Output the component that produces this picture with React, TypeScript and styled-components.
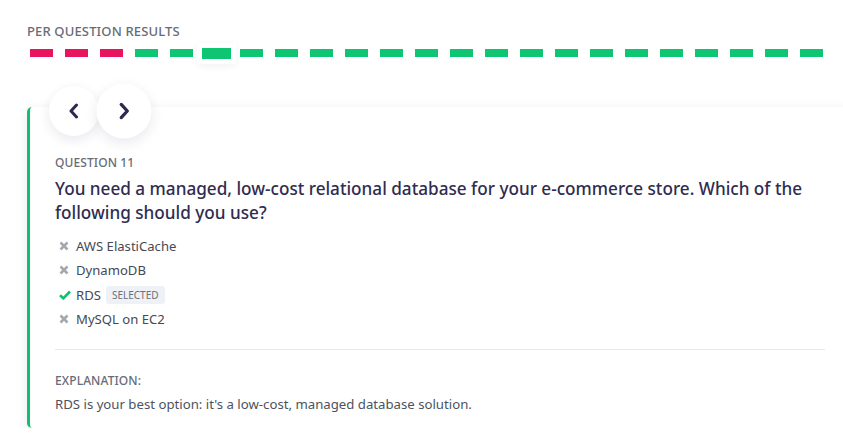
import React from "react";
import styled, { createGlobalStyle } from "styled-components";

const GlobalStyle = createGlobalStyle`
  html, body { margin: 0; padding: 0; background: #ffffff; overflow: hidden; }
  body { font-family: "Segoe UI", "Noto Sans", "Open Sans", sans-serif; }
`;

const Page = styled.div`
  padding: 21px 0 0 27px;
  width: 826px;
`;

const SectionTitle = styled.div`
  font-size: 13px;
  line-height: 20px;
  font-weight: 500;
  color: #676b77;
  letter-spacing: 0.15px;
  text-transform: uppercase;
`;

const DashRow = styled.div`
  display: flex;
  gap: 12px;
  margin: 8px 0 0 3px;
  height: 8px;
`;

const DashCell = styled.div`
  width: 23px;
  height: 8px;
  display: flex;
  align-items: center;
  justify-content: center;
  flex-shrink: 0;
`;

const Dash = styled.div<{ $wrong: boolean; $active: boolean }>`
  flex-shrink: 0;
  width: ${(p) => (p.$active ? 29 : 23)}px;
  height: ${(p) => (p.$active ? 11 : 8)}px;
  background: ${(p) => (p.$wrong ? "#e8145e" : "#0ec572")};
  box-shadow: ${(p) =>
    p.$active ? "0 0 0 5px #ffffff, 0 2px 8px 4px rgba(30, 40, 80, 0.08)" : "none"};
`;

const Card = styled.div`
  position: relative;
  margin-top: 50px;
  background: #ffffff;
  border-left: 3px solid #10c06e;
  border-radius: 5px 0 0 5px;
  box-shadow: 0 3px 12px rgba(30, 40, 80, 0.09);
  padding: 47px 0 14px 25px;
  width: 798px;
`;

const NavGroup = styled.div`
  position: absolute;
  top: -21px;
  left: 19px;
  display: flex;
`;

const NavButton = styled.button<{ $hover?: boolean }>`
  width: 50px;
  height: 50px;
  border-radius: 50%;
  border: none;
  background: #ffffff;
  display: flex;
  align-items: center;
  justify-content: center;
  padding: 0;
  box-shadow: 0 4px 12px rgba(30, 40, 80, 0.1);
  transform: ${(p) => (p.$hover ? "scale(1.1)" : "none")};
  color: #2c2a4e;
`;

const Label = styled.div`
  font-size: 12px;
  line-height: 18px;
  font-weight: 500;
  color: #676b77;
  letter-spacing: 0.1px;
  text-transform: uppercase;
`;

const Question = styled.div`
  margin-top: 5px;
  font-size: 17.15px;
  line-height: 24px;
  font-weight: 500;
  color: #2f2c4f;
`;

const Options = styled.ul`
  list-style: none;
  margin: 9px 0 0;
  padding: 0;
`;

const Option = styled.li`
  display: flex;
  align-items: center;
  height: 24.3px;
  font-size: 13.1px;
  color: #454a56;
`;

const IconBox = styled.span`
  width: 17px;
  margin-left: 4px;
  display: flex;
  align-items: center;
`;

const Badge = styled.span`
  margin-left: 5px;
  background: #eef1f5;
  color: #6b6f7b;
  font-size: 10px;
  text-transform: uppercase;
  padding: 2px 6px;
  border-radius: 3px;
  line-height: 14px;
`;

const Divider = styled.hr`
  border: none;
  border-top: 1px solid #e9eaee;
  margin: 18px 0 0;
  width: 770px;
`;

const ExplanationLabel = styled(Label)`
  margin-top: 22px;
`;

const ExplanationText = styled.div`
  margin-top: 4px;
  font-size: 13.2px;
  line-height: 20px;
  color: #4d5260;
`;

const Cross = () => (
  <svg width="10" height="10" viewBox="0 0 10 10">
    <path d="M1.5 1.5 L8.5 8.5 M8.5 1.5 L1.5 8.5" stroke="#a3a7ae" strokeWidth="2.6" strokeLinecap="butt" />
  </svg>
);

const Check = () => (
  <svg width="12" height="10" viewBox="0 0 12 10">
    <path d="M1 5.2 L4.3 8.3 L11 1.5" stroke="#10c06e" strokeWidth="2.6" fill="none" />
  </svg>
);

const Chevron = ({ dir }: { dir: "left" | "right" }) => (
  <svg width="12" height="16" viewBox="0 0 12 16">
    <path
      d={dir === "left" ? "M8.5 2 L3 8 L8.5 14" : "M3.5 2 L9 8 L3.5 14"}
      stroke="currentColor"
      strokeWidth="3"
      fill="none"
      strokeLinecap="round"
      strokeLinejoin="round"
    />
  </svg>
);

const results = Array.from({ length: 23 }, (_, i) => ({ wrong: i < 3, active: i === 5 }));

const options = [
  { text: "AWS ElastiCache", correct: false, selected: false },
  { text: "DynamoDB", correct: false, selected: false },
  { text: "RDS", correct: true, selected: true },
  { text: "MySQL on EC2", correct: false, selected: false },
];

export default function App() {
  return (
    <>
      <GlobalStyle />
      <Page>
        <SectionTitle>Per Question Results</SectionTitle>
        <DashRow>
          {results.map((r, i) => (
            <DashCell key={i}>
              <Dash $wrong={r.wrong} $active={r.active} />
            </DashCell>
          ))}
        </DashRow>
        <Card>
          <NavGroup>
            <NavButton>
              <Chevron dir="left" />
            </NavButton>
            <NavButton $hover>
              <Chevron dir="right" />
            </NavButton>
          </NavGroup>
          <Label>Question 11</Label>
          <Question>
            You need a managed, low-cost relational database for your e-commerce store. Which of the
            following should you use?
          </Question>
          <Options>
            {options.map((o) => (
              <Option key={o.text}>
                <IconBox>{o.correct ? <Check /> : <Cross />}</IconBox>
                {o.text}
                {o.selected && <Badge>Selected</Badge>}
              </Option>
            ))}
          </Options>
          <Divider />
          <ExplanationLabel>Explanation:</ExplanationLabel>
          <ExplanationText>
            RDS is your best option: it's a low-cost, managed database solution.
          </ExplanationText>
        </Card>
      </Page>
    </>
  );
}
